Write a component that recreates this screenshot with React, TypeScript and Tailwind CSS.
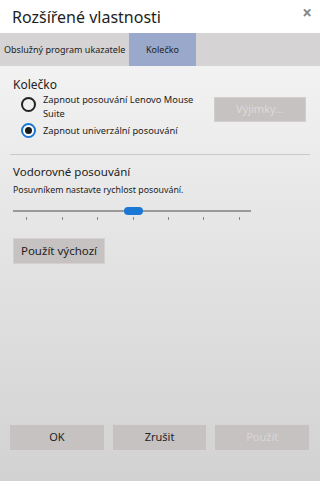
import React from 'react';

const ticks = [26, 62, 97, 133, 168, 203, 239];

const Radio = ({ checked }: { checked?: boolean }) =>
  checked ? (
    <span className="flex h-[15px] w-[15px] shrink-0 items-center justify-center rounded-full border-2 border-[#1a78d4] bg-white">
      <span className="block h-[7px] w-[7px] rounded-full bg-[#1a1a1a]" />
    </span>
  ) : (
    <span className="block h-[15px] w-[15px] shrink-0 rounded-full border-2 border-[#222]" />
  );

export default function App() {
  return (
    <div className="flex h-[481px] w-[320px] flex-col overflow-hidden font-['Noto_Sans',sans-serif] text-[#222]">
      {/* title */}
      <div className="relative flex h-[33px] items-center bg-white pl-[12px]">
        <span className="text-[16px] leading-none text-[#1e1e1e]">Rozšířené vlastnosti</span>
        <span className="absolute right-[8px] top-[4px] text-[17px] font-bold leading-none text-[#888]">×</span>
      </div>

      {/* tabs */}
      <div className="flex h-[33px] items-stretch bg-[#d5d3d3] text-[9px]">
        <div className="flex w-[129px] items-center pl-[4px]">Obslužný program ukazatele</div>
        <div className="flex w-[67px] items-center justify-center bg-[#9aa9cb]">Kolečko</div>
      </div>

      {/* content */}
      <div className="flex flex-1 flex-col bg-gradient-to-b from-[#f2f2f2] to-[#d2d2d2] px-[10px]">
        <div className="mt-[11px] pl-[3px] text-[12px] leading-[16px]">Kolečko</div>

        <div className="flex">
          <div className="flex w-[204px] flex-col gap-[2px] pl-[11px]">
            <div className="flex items-start gap-[7px]">
              <span className="mt-[4px] block"><Radio /></span>
              <span className="text-[9.3px] leading-[14px]">Zapnout posouvání Lenovo Mouse Suite</span>
            </div>
            <div className="flex items-center gap-[7px]">
              <Radio checked />
              <span className="text-[9.3px] leading-[14px]">Zapnout univerzální posouvání</span>
            </div>
          </div>
          <div className="mt-[4px] flex h-[25px] w-[92px] items-center justify-center border border-[#d2cece] bg-[#c6c2c2] text-[11px] text-[#dcdada]">
            Výjimky...
          </div>
        </div>

        <div className="mt-[16px] h-px bg-[#c9c9c9]" />

        <div className="mt-[9px] pl-[3px] text-[11.5px] leading-[16px]">Vodorovné posouvání</div>
        <div className="mt-[4px] pl-[3px] text-[8.8px] leading-[12px]">Posuvníkem nastavte rychlost posouvání.</div>

        <div className="relative ml-[3px] mt-[10px] h-[18px] w-[238px]">
          <div className="absolute left-0 right-0 top-[4px] h-[2px] bg-[#9a9a9a]" />
          <div className="absolute left-[111px] top-[1px] h-[8px] w-[19px] rounded-full bg-[#1a78d4]" />
          {ticks.map((t) => (
            <div key={t} className="absolute top-[11px] h-[3px] w-px bg-[#888]" style={{ left: t - 13 }} />
          ))}
        </div>

        <div className="ml-[3px] mt-[14px] flex h-[26px] w-[92px] items-center justify-center border border-[#d4d0d0] bg-[#c6c2c2] text-[11.5px]">
          Použít výchozí
        </div>

        <div className="flex-1" />

        <div className="mb-[30px] flex gap-[7px]">
          <div className="-ml-[1px] flex h-[27px] w-[97px] items-center justify-center border border-[#d8d4d4] bg-[#c6c2c2] text-[11px]">OK</div>
          <div className="flex h-[27px] w-[97px] items-center justify-center border border-[#d8d4d4] bg-[#c6c2c2] text-[11px]">Zrušit</div>
          <div className="flex h-[27px] w-[97px] items-center justify-center border border-[#d8d4d4] bg-[#c6c2c2] text-[11px] text-[#d8d6d6]">Použít</div>
        </div>
      </div>
    </div>
  );
}
